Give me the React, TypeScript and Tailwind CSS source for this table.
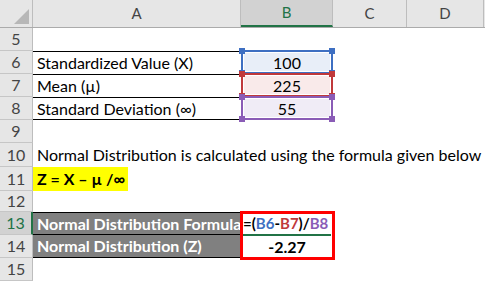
import type { ReactNode } from 'react'

const COLS = ['w-[208px]', 'w-[92px]', 'w-[74px]', 'w-[77px]']

type RowProps = {
    num: number
    h: string
    selected?: boolean
    children?: ReactNode
}

const Row = ({ num, h, selected, children }: RowProps) => (
    <div className={`flex ${h}`}>
        <div
            className={
                selected
                    ? 'w-[33px] shrink-0 flex items-center justify-center bg-[#d2d2d2] text-[#217346] border-b border-[#c6c6c6] border-r-2 border-r-[#217346]'
                    : 'w-[33px] shrink-0 flex items-center justify-center bg-[#e6e6e6] text-[#444] border-b border-[#c6c6c6] border-r border-r-[#bdbdbd]'
            }
        >
            {num}
        </div>
        {children}
    </div>
)

const RangeBox = ({ top, border, handle }: { top: string; border: string; handle: string }) => (
    <div className={`absolute left-[241px] w-[92px] h-[24px] ${top}`}>
        <div className={`absolute inset-0 border-2 ${border} shadow-[inset_0_0_0_1px_white]`} />
        <div className={`absolute -left-[2px] -top-[2px] w-[6px] h-[6px] ${handle}`} />
        <div className={`absolute -right-[2px] -top-[2px] w-[6px] h-[6px] ${handle}`} />
        <div className={`absolute -left-[2px] -bottom-[2px] w-[6px] h-[6px] ${handle}`} />
        <div className={`absolute -right-[2px] -bottom-[2px] w-[6px] h-[6px] ${handle}`} />
    </div>
)

export default function App() {
    return (
        <div className="relative w-[485px] h-[281px] bg-white overflow-hidden text-[16px] text-black" style={{ fontFamily: 'Lato, "Open Sans", sans-serif' }}>
            {/* column headers */}
            <div className="flex h-[28px] bg-[#e6e6e6] border-b border-[#ababab] text-[15px]">
                <div className="relative w-[33px] shrink-0 border-r border-[#bdbdbd]">
                    <svg className="absolute right-[3px] bottom-[3px]" width="15" height="15" viewBox="0 0 15 15">
                        <polygon points="15,0 15,15 0,15" fill="#b7b7b7" />
                    </svg>
                </div>
                <div className="w-[208px] flex items-center justify-center text-[#444] border-r border-[#bdbdbd]">A</div>
                <div className="w-[92px] flex items-center justify-center text-[#217346] bg-[#d2d2d2] border-b-2 border-[#217346] border-r border-r-[#bdbdbd]">B</div>
                <div className="w-[74px] flex items-center justify-center text-[#444] border-r border-[#bdbdbd]">C</div>
                <div className="w-[77px] flex items-center justify-center text-[#444] border-r border-[#bdbdbd]">D</div>
                <div className="flex-1" />
            </div>

            <Row num={5} h="h-[23px]" />
            <Row num={6} h="h-[23px]">
                <div className={`${COLS[0]} border-t border-black flex items-center pl-[4px]`}>Standardized Value (X)</div>
                <div className={`${COLS[1]} bg-[#e8eef8] flex items-center justify-center`}>100</div>
            </Row>
            <Row num={7} h="h-[23px]">
                <div className={`${COLS[0]} border-t border-black flex items-center pl-[4px]`}>Mean (µ)</div>
                <div className={`${COLS[1]} bg-[#f9eaea] flex items-center justify-center`}>225</div>
            </Row>
            <Row num={8} h="h-[23px]">
                <div className={`${COLS[0]} border-y border-black flex items-center pl-[4px]`}>Standard Deviation (∞)</div>
                <div className={`${COLS[1]} bg-[#f0ecf6] flex items-center justify-center`}>55</div>
            </Row>
            <Row num={9} h="h-[23px]" />
            <Row num={10} h="h-[24px]">
                <div className="flex items-center pl-[4px] whitespace-nowrap">Normal Distribution is calculated using the formula given below</div>
            </Row>
            <Row num={11} h="h-[24px]">
                <div className="w-[95px] bg-[#ffff00] flex items-center pl-[4px] font-bold whitespace-nowrap">Z = X – µ /∞</div>
            </Row>
            <Row num={12} h="h-[21px]" />
            <Row num={13} h="h-[23px]" selected>
                <div className={`${COLS[0]} bg-[#808080] border-y border-black flex items-center pl-[4px] font-bold text-white whitespace-nowrap`}>Normal Distribution Formula</div>
                <div className={`${COLS[1]} flex items-center pl-[2px] font-bold whitespace-nowrap text-[15px]`}>
                    <span>=(</span>
                    <span className="text-[#3e6fc2]">B6</span>
                    <span>-</span>
                    <span className="text-[#c0393b]">B7</span>
                    <span>)/</span>
                    <span className="text-[#8a5cb6]">B8</span>
                </div>
            </Row>
            <Row num={14} h="h-[23px]">
                <div className={`${COLS[0]} bg-[#808080] border-b border-black flex items-center pl-[4px] font-bold text-white whitespace-nowrap`}>Normal Distribution (Z)</div>
                <div className={`${COLS[1]} flex items-center justify-center font-bold`}>-2.27</div>
            </Row>
            <Row num={15} h="h-[23px]" />

            {/* formula reference highlights */}
            <div className="absolute inset-0 pointer-events-none">
                <RangeBox top="top-[50px]" border="border-[#3e6fc2]" handle="bg-[#3e6fc2]" />
                <RangeBox top="top-[73px]" border="border-[#c0393b]" handle="bg-[#c0393b]" />
                <RangeBox top="top-[96px]" border="border-[#8a5cb6]" handle="bg-[#8a5cb6]" />
            </div>

            {/* active cell + red box */}
            <div className="absolute left-[243px] top-[234px] w-[90px] h-[2px] bg-[#217346]" />
            <div className="absolute left-[331px] top-[232px] w-[5px] h-[5px] bg-[#217346] border border-white" />
            <div className="absolute left-[240px] top-[211px] w-[95px] h-[49px] border-[3px] border-[#ff0000]" />
        </div>
    )
}
